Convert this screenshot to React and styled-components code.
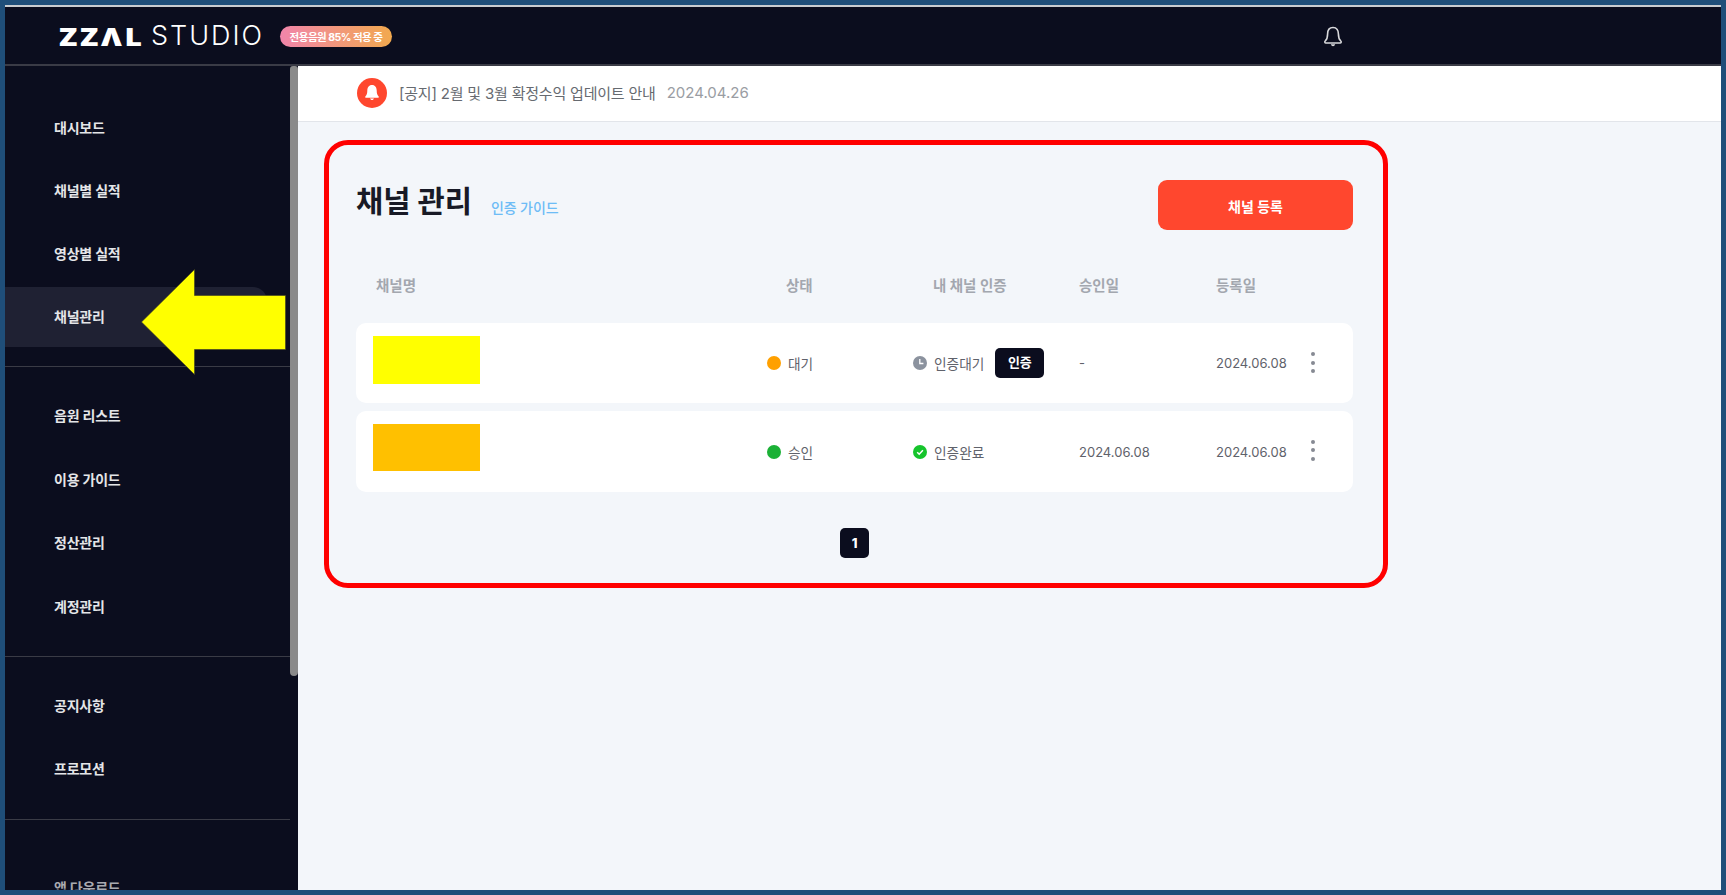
import React from 'react';
import styled, { createGlobalStyle } from 'styled-components';

const FONT = `Inter, "Noto Sans CJK KR", "Noto Sans", sans-serif`;
const COLS = '411px 146px 166px 137px 137px';

const Global = createGlobalStyle`
  html, body { margin: 0; padding: 0; overflow: hidden; }
  body { font-family: ${FONT}; }
  * { box-sizing: border-box; }
`;

const Frame = styled.div`
  width: 1726px; height: 895px; border: 5px solid #1f4e79;
  display: flex; flex-direction: column; overflow: hidden; position: relative;
  background: #f3f6fa;
  &::before { content: ''; display: block; height: 2px; flex: none; background: #c9ccd0; }
`;
const Header = styled.header`
  height: 59px; flex: none; background: #0b0d1e; border-bottom: 2px solid #3a3b46;
  display: flex; align-items: center; padding-left: 54px; position: relative;
`;
const Logo = styled.div`
  display: flex; align-items: center; color: #fff; font-family: Inter, sans-serif;
  font-size: 27px; line-height: 30px; margin-top: 1px;
`;
const LogoBold = styled.span`
  display: block; font-weight: 800; letter-spacing: 2.2px; width: 92px; font-size: 25px;
  font-family: "Open Sans", Inter, sans-serif; transform: scaleX(1.2); transform-origin: left center;
`;
const LogoLight = styled.span`font-weight: 300; letter-spacing: 2px; width: 130px;`;
const Promo = styled.span`
  width: 112px; height: 21px; border-radius: 11px; margin-top: 1px; margin-left: -1px;
  background: linear-gradient(90deg, #f185ab, #f2a94e);
  color: #fff; font-size: 10.5px; font-weight: 700; letter-spacing: -0.5px;
  display: flex; align-items: center; justify-content: center;
`;
const BellButton = styled.span`
  position: absolute; left: 1318px; top: 19px; width: 20px; height: 22px; display: block;
`;
const Body = styled.div`flex: 1; min-height: 0; display: flex;`;
const Sidebar = styled.aside`
  width: 293px; flex: none; background: #0b0d1e; position: relative; overflow: hidden;
  padding: 32px 8px 0 0;
`;
const Thumb = styled.div`
  position: absolute; right: 0; top: 0; width: 8px; height: 610px;
  background: #8a8a8a; border-radius: 3px 3px 4px 4px;
`;
const Group = styled.nav`display: flex; flex-direction: column; gap: ${p => p.$gap || 3}px;`;
const Item = styled.div`
  height: 60px; flex: none; display: flex; align-items: center; padding: 0 0 2px 49px;
  width: ${p => (p.$active ? '262px' : '100%')};
  background: ${p => (p.$active ? '#1f2133' : 'transparent')};
  border-radius: 0 14px 14px 0;
  color: ${p => (p.$dim ? '#a9aab0' : '#e4e5e8')};
  font-size: 14px; font-weight: 700; letter-spacing: -0.2px;
`;
const SideRule = styled.hr`
  border: 0; height: 1px; background: #3a3b46; margin: ${p => p.$m || '19px 0'};
`;
const Main = styled.main`flex: 1; min-width: 0; display: flex; flex-direction: column;`;
const Notice = styled.div`
  height: 56px; flex: none; background: #fff; border-bottom: 1px solid #e2e5ea;
  display: flex; align-items: center; padding-left: 59px; padding-bottom: 2px;
`;
const NoticeIcon = styled.span`
  width: 30px; height: 30px; border-radius: 50%; background: #ff472e; display: flex;
  align-items: center; justify-content: center; margin-right: 12px;
`;
const NoticeText = styled.span`font-size: 15px; color: #666a70; letter-spacing: -0.2px;`;
const NoticeDate = styled.span`font-size: 15px; color: #9a9da3; margin-left: 11px;`;
const Panel = styled.section`
  width: 1064px; height: 448px; margin: 18px 0 0 26px; border: 5px solid #ff0000;
  border-radius: 24px; padding: 35px 30px 25px 27px; display: flex; flex-direction: column;
`;
const TitleRow = styled.div`height: 50px; flex: none; display: flex; align-items: flex-start;`;
const Title = styled.h1`
  margin: 1px 0 0; font-size: 29.6px; line-height: 40px; font-weight: 700; color: #181a26; letter-spacing: 0;
`;
const Guide = styled.a`
  margin: 18px 0 0 19px; font-size: 14px; line-height: 20px; color: #6dbcf6; font-weight: 500;
  letter-spacing: -0.1px;
`;
const PrimaryButton = styled.button`
  margin-left: auto; width: 195px; height: 50px; border: 0; border-radius: 9px; padding: 1px 0 0;
  background: #ff472e; color: #fff; font: 700 14px ${FONT};
`;
const ColHead = styled.div`
  display: grid; grid-template-columns: ${COLS}; height: 24px; margin: 42px 0 27px; flex: none;
  align-items: center; font-size: 14.5px; font-weight: 700; color: #a3a7af;
`;
const ColLabel = styled.span`padding-left: ${p => p.$pad || 0}px;`;
const Rows = styled.div`display: flex; flex-direction: column; gap: 8px; flex: none;`;
const Row = styled.div`
  display: grid; grid-template-columns: ${COLS}; height: ${p => p.$h}px; background: #fff;
  border-radius: 10px; align-items: center; font-size: 13.7px; color: #5f626b;
  position: relative;
`;
const ThumbBox = styled.div`
  align-self: start; margin: 13px 0 0 17px; width: 107px; height: ${p => p.$h}px; background: ${p => p.$c};
`;
const Status = styled.div`display: flex; align-items: center; gap: 7px;`;
const Dot = styled.i`display: block; width: 14px; height: 14px; border-radius: 50%; background: ${p => p.$c};`;
const Verify = styled.div`display: flex; align-items: center; gap: 7px;`;
const VerifyButton = styled.span`
  width: 49px; height: 30px; border-radius: 5px; background: #0b0d1e; color: #fff;
  font-size: 13px; font-weight: 700; display: flex; align-items: center; justify-content: center;
  margin: -1px 0 0 4px; padding-bottom: 2px;
`;
const DateText = styled.span`font-size: 13px; color: #5f626b;`;
const Kebab = styled.span`
  position: absolute; right: 38px; top: 50%; margin-top: -${p => p.$up}px; width: 5px; height: 21px;
  display: flex; flex-direction: column; justify-content: space-between; align-items: center;
`;
const KebabDot = styled.i`display: block; width: 4px; height: 4px; border-radius: 50%; background: #868a93;`;
const Pager = styled.div`display: flex; justify-content: center; margin-top: 36px;`;
const PageNum = styled.span`
  width: 29px; height: 30px; border-radius: 5px; background: #0b0d1e; color: #fff;
  font-size: 13px; font-weight: 800; display: flex; align-items: center; justify-content: center;
`;
const Arrow = styled.svg`position: absolute; left: 136px; top: 264px; width: 150px; height: 106px; overflow: visible;`;

const ClockIcon = () => (
  <svg width="14" height="14" viewBox="0 0 14 14">
    <circle cx="7" cy="7" r="7" fill="#8b929e" />
    <path d="M6.800 3V7.500H10.400" fill="none" stroke="#fff" strokeWidth="1.300" />
  </svg>
);
const CheckIcon = () => (
  <svg width="14" height="14" viewBox="0 0 14 14">
    <circle cx="7" cy="7" r="7" fill="#16c42c" />
    <path d="M4.200 7.200 6.200 9.200 9.900 5.200" fill="none" stroke="#fff" strokeWidth="1.500" />
  </svg>
);

const channels = [
  { h: 80, tc: '#ffff00', th: 48, dot: '#ffa000', st: '대기', pending: true, ok: '-', reg: '2024.06.08', up: 11 },
  { h: 81, tc: '#ffc000', th: 47, dot: '#1bb136', st: '승인', pending: false, ok: '2024.06.08', reg: '2024.06.08', up: 12 },
];

export default function App() {
  return (
    <Frame>
      <Global />
      <Header>
        <Logo>
          <LogoBold>ZZΛL</LogoBold>
          <LogoLight>STUDIO</LogoLight>
        </Logo>
        <Promo>전용음원 85% 적용 중</Promo>
        <BellButton>
          <svg width="20" height="22" viewBox="0 0 20 22" fill="none" stroke="#d9d9dc" strokeWidth="1.600" strokeLinejoin="round">
            <path d="M10 1.500C6.200 1.500 4.600 4.500 4.600 8c0 3.600-.8 5.600-2.400 7-.8.7-.4 2 .7 2h14.200c1.100 0 1.500-1.300.7-2-1.600-1.400-2.400-3.400-2.400-7 0-3.500-1.600-6.500-5.400-6.500Z" />
            <path d="M7.800 18.200c.4 1.300 1.200 2 2.200 2s1.800-.7 2.200-2Z" fill="#d9d9dc" stroke="none" />
          </svg>
        </BellButton>
      </Header>
      <Body>
        <Sidebar>
          <Thumb />
          <Group>
            <Item>대시보드</Item>
            <Item>채널별 실적</Item>
            <Item>영상별 실적</Item>
            <Item $active>채널관리</Item>
          </Group>
          <SideRule />
          <Group $gap={3.5}>
            <Item>음원 리스트</Item>
            <Item>이용 가이드</Item>
            <Item>정산관리</Item>
            <Item>계정관리</Item>
          </Group>
          <SideRule $m="19.5px 0 19px" />
          <Group>
            <Item>공지사항</Item>
            <Item>프로모션</Item>
          </Group>
          <SideRule $m="20px 0 38px" />
          <Group>
            <Item $dim>앱 다운로드</Item>
          </Group>
        </Sidebar>
        <Main>
          <Notice>
            <NoticeIcon>
              <svg width="16" height="17" viewBox="0 0 16 17" fill="#fff">
                <path d="M8 1C4.800 1 3.300 3.500 3.300 6.500c0 3-.6 4.600-1.800 5.700-.6.6-.3 1.600.6 1.600h11.800c.9 0 1.200-1 .6-1.600-1.200-1.100-1.800-2.700-1.800-5.700C12.700 3.500 11.200 1 8 1Z" />
                <path d="M6 14.500h4c-.3.9-1 1.500-2 1.500s-1.700-.6-2-1.500Z" />
              </svg>
            </NoticeIcon>
            <NoticeText>[공지] 2월 및 3월 확정수익 업데이트 안내</NoticeText>
            <NoticeDate>2024.04.26</NoticeDate>
          </Notice>
          <Panel>
            <TitleRow>
              <Title>채널 관리</Title>
              <Guide>인증 가이드</Guide>
              <PrimaryButton>채널 등록</PrimaryButton>
            </TitleRow>
            <ColHead>
              <ColLabel $pad={20}>채널명</ColLabel>
              <ColLabel $pad={19}>상태</ColLabel>
              <ColLabel $pad={20}>내 채널 인증</ColLabel>
              <ColLabel>승인일</ColLabel>
              <ColLabel>등록일</ColLabel>
            </ColHead>
            <Rows>
              {channels.map((c, i) => (
                <Row key={i} $h={c.h}>
                  <ThumbBox $c={c.tc} $h={c.th} />
                  <Status><Dot $c={c.dot} />{c.st}</Status>
                  <Verify>
                    {c.pending ? <ClockIcon /> : <CheckIcon />}
                    {c.pending ? '인증대기' : '인증완료'}
                    {c.pending && <VerifyButton>인증</VerifyButton>}
                  </Verify>
                  <DateText>{c.ok}</DateText>
                  <DateText>{c.reg}</DateText>
                  <Kebab $up={c.up}><KebabDot /><KebabDot /><KebabDot /></Kebab>
                </Row>
              ))}
            </Rows>
            <Pager><PageNum>1</PageNum></Pager>
          </Panel>
        </Main>
      </Body>
      <Arrow viewBox="0 0 150 106">
        <path d="M0.500 53 53.500 0.500V26.500H144.500V80.500H53.500V105.500Z" fill="#ffff00" stroke="#3d3d20" strokeWidth="0.600" />
      </Arrow>
    </Frame>
  );
}
